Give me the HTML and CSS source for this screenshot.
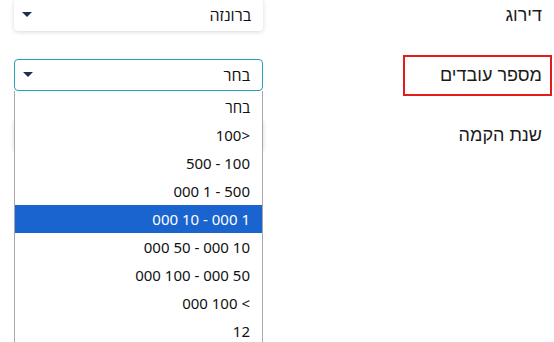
FILE: index.html
```html
<!DOCTYPE html>
<html lang="he" dir="rtl">
<head>
    <meta charset="UTF-8">
    <meta name="viewport" content="width=device-width, initial-scale=1.0">
    <title>פרטי חברה</title>
    <link rel="stylesheet" href="styles.css">
</head>
<body>
    <div class="form">
        <div class="row">
            <div class="label">דירוג</div>
            <div class="select">
                <span class="value">ברונזה</span>
                <span class="arrow"></span>
            </div>
        </div>

        <div class="row">
            <div class="label marked">מספר עובדים</div>
            <div class="select open">
                <span class="value">בחר</span>
                <span class="arrow"></span>
                <ul class="options">
                    <li>בחר</li>
                    <li>100&gt;</li>
                    <li>500 - 100</li>
                    <li>000 1 - 500</li>
                    <li class="active">000 10 - 000 1</li>
                    <li>000 50 - 000 10</li>
                    <li>000 100 - 000 50</li>
                    <li>000 100 &lt;</li>
                    <li>12</li>
                </ul>
            </div>
        </div>

        <div class="row">
            <div class="label">שנת הקמה</div>
            <div class="select">
                <span class="value">בחר</span>
                <span class="arrow"></span>
            </div>
        </div>
    </div>
</body>
</html>
```

FILE: styles.css
```css
html, body {
    height: 100%;
}
body {
    margin: 0;
    background: #fff;
    font-family: "Noto Sans", "Open Sans", "Noto Sans Hebrew", "DejaVu Sans", sans-serif;
    color: #111;
}
.form {
    margin-top: -1px;
    display: flex;
    flex-direction: column;
    gap: 28px;
}
.row {
    display: flex;
    align-items: center;
    justify-content: space-between;
    height: 32px;
    padding: 0 2px 0 14px;
}
.label {
    flex-shrink: 0;
    box-sizing: border-box;
    width: 149px;
    height: 41px;
    padding-right: 8px;
    border: 2px solid transparent;
    display: flex;
    align-items: center;
    white-space: nowrap;
    font-family: "Liberation Sans", Arial, sans-serif;
    font-size: 18px;
    color: #1a1a1a;
}
.label.marked {
    border-color: #e41b1b;
}
.select {
    flex-shrink: 0;
    position: relative;
    box-sizing: border-box;
    width: 249px;
    height: 32px;
    padding: 0 12px 0 8px;
    display: flex;
    align-items: center;
    justify-content: space-between;
    background: #fff;
    border-radius: 4px;
    box-shadow: 0 1px 4px rgba(0, 0, 0, 0.16);
    font-size: 16px;
}
.select.open {
    border: 1px solid #27a3b7;
    box-shadow: none;
    z-index: 2;
}
.arrow {
    width: 0;
    height: 0;
    border-left: 5px solid transparent;
    border-right: 5px solid transparent;
    border-top: 5px solid #1f2e4c;
    margin-top: -1px;
}
.options {
    position: absolute;
    top: 31px;
    left: -1px;
    box-sizing: border-box;
    width: 249px;
    margin: 0;
    padding: 2px 0 0;
    list-style: none;
    background: #fff;
    border: 1px solid #a8a8a8;
    border-top: none;
}
.options li {
    direction: ltr;
    text-align: right;
    height: 28px;
    line-height: 28px;
    padding-right: 12px;
    font-size: 15px;
    color: #111;
}
.options li.active {
    background: #1a64d0;
    color: #fff;
}
```
